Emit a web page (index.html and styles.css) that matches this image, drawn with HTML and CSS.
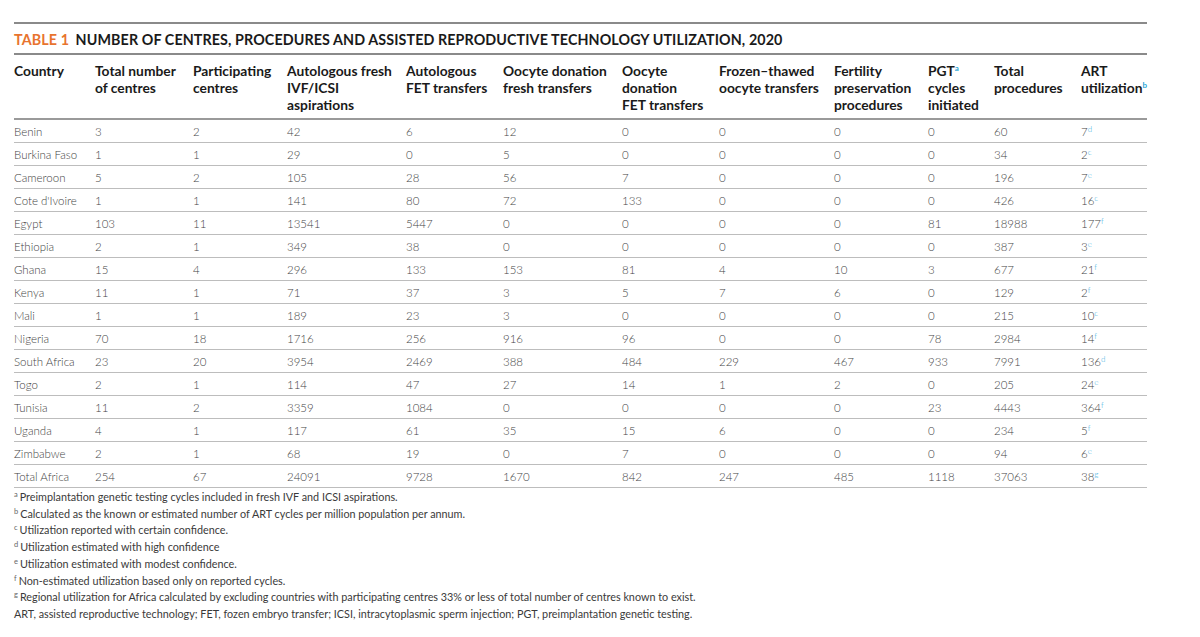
FILE: index.html
```html
<!DOCTYPE html>
<html>
<head>
<meta charset="utf-8">
<link rel="stylesheet" href="styles.css">
</head>
<body>
<div class="page">
  <div class="caption"><span class="tag">TABLE 1</span> NUMBER OF CENTRES, PROCEDURES AND ASSISTED REPRODUCTIVE TECHNOLOGY UTILIZATION, 2020</div>
  <table class="data">
    <colgroup>
      <col class="c1"><col class="c2"><col class="c3"><col class="c4"><col class="c5"><col class="c6"><col class="c7"><col class="c8"><col class="c9"><col class="c10"><col class="c11"><col class="c12">
    </colgroup>
    <thead>
      <tr>
        <th>Country</th>
        <th>Total number<br>of centres</th>
        <th>Participating<br>centres</th>
        <th>Autologous fresh<br>IVF/ICSI<br>aspirations</th>
        <th>Autologous<br>FET transfers</th>
        <th>Oocyte donation<br>fresh transfers</th>
        <th>Oocyte<br>donation<br>FET transfers</th>
        <th>Frozen–thawed<br>oocyte transfers</th>
        <th>Fertility<br>preservation<br>procedures</th>
        <th>PGT<sup class="hs">a</sup><br>cycles<br>initiated</th>
        <th>Total<br>procedures</th>
        <th>ART<br>utilization<sup class="hs">b</sup></th>
      </tr>
    </thead>
    <tbody>
      <tr><td>Benin</td><td>3</td><td>2</td><td>42</td><td>6</td><td>12</td><td>0</td><td>0</td><td>0</td><td>0</td><td>60</td><td>7<sup class="s">d</sup></td></tr>
      <tr><td>Burkina Faso</td><td>1</td><td>1</td><td>29</td><td>0</td><td>5</td><td>0</td><td>0</td><td>0</td><td>0</td><td>34</td><td>2<sup class="s">c</sup></td></tr>
      <tr><td>Cameroon</td><td>5</td><td>2</td><td>105</td><td>28</td><td>56</td><td>7</td><td>0</td><td>0</td><td>0</td><td>196</td><td>7<sup class="s">e</sup></td></tr>
      <tr><td>Cote d'Ivoire</td><td>1</td><td>1</td><td>141</td><td>80</td><td>72</td><td>133</td><td>0</td><td>0</td><td>0</td><td>426</td><td>16<sup class="s">c</sup></td></tr>
      <tr><td>Egypt</td><td>103</td><td>11</td><td>13541</td><td>5447</td><td>0</td><td>0</td><td>0</td><td>0</td><td>81</td><td>18988</td><td>177<sup class="s">f</sup></td></tr>
      <tr><td>Ethiopia</td><td>2</td><td>1</td><td>349</td><td>38</td><td>0</td><td>0</td><td>0</td><td>0</td><td>0</td><td>387</td><td>3<sup class="s">e</sup></td></tr>
      <tr><td>Ghana</td><td>15</td><td>4</td><td>296</td><td>133</td><td>153</td><td>81</td><td>4</td><td>10</td><td>3</td><td>677</td><td>21<sup class="s">f</sup></td></tr>
      <tr><td>Kenya</td><td>11</td><td>1</td><td>71</td><td>37</td><td>3</td><td>5</td><td>7</td><td>6</td><td>0</td><td>129</td><td>2<sup class="s">f</sup></td></tr>
      <tr><td>Mali</td><td>1</td><td>1</td><td>189</td><td>23</td><td>3</td><td>0</td><td>0</td><td>0</td><td>0</td><td>215</td><td>10<sup class="s">c</sup></td></tr>
      <tr><td>Nigeria</td><td>70</td><td>18</td><td>1716</td><td>256</td><td>916</td><td>96</td><td>0</td><td>0</td><td>78</td><td>2984</td><td>14<sup class="s">f</sup></td></tr>
      <tr><td>South Africa</td><td>23</td><td>20</td><td>3954</td><td>2469</td><td>388</td><td>484</td><td>229</td><td>467</td><td>933</td><td>7991</td><td>136<sup class="s">d</sup></td></tr>
      <tr><td>Togo</td><td>2</td><td>1</td><td>114</td><td>47</td><td>27</td><td>14</td><td>1</td><td>2</td><td>0</td><td>205</td><td>24<sup class="s">e</sup></td></tr>
      <tr><td>Tunisia</td><td>11</td><td>2</td><td>3359</td><td>1084</td><td>0</td><td>0</td><td>0</td><td>0</td><td>23</td><td>4443</td><td>364<sup class="s">f</sup></td></tr>
      <tr><td>Uganda</td><td>4</td><td>1</td><td>117</td><td>61</td><td>35</td><td>15</td><td>6</td><td>0</td><td>0</td><td>234</td><td>5<sup class="s">f</sup></td></tr>
      <tr><td>Zimbabwe</td><td>2</td><td>1</td><td>68</td><td>19</td><td>0</td><td>7</td><td>0</td><td>0</td><td>0</td><td>94</td><td>6<sup class="s">e</sup></td></tr>
      <tr><td>Total Africa</td><td>254</td><td>67</td><td>24091</td><td>9728</td><td>1670</td><td>842</td><td>247</td><td>485</td><td>1118</td><td>37063</td><td>38<sup class="s">g</sup></td></tr>
    </tbody>
  </table>
  <div class="notes">
    <p><sup>a</sup>Preimplantation genetic testing cycles included in fresh IVF and ICSI aspirations.</p>
    <p><sup>b</sup>Calculated as the known or estimated number of ART cycles per million population per annum.</p>
    <p><sup>c</sup>Utilization reported with certain confidence.</p>
    <p><sup>d</sup>Utilization estimated with high confidence</p>
    <p><sup>e</sup>Utilization estimated with modest confidence.</p>
    <p><sup>f</sup>Non-estimated utilization based only on reported cycles.</p>
    <p><sup>g</sup>Regional utilization for Africa calculated by excluding countries with participating centres 33% or less of total number of centres known to exist.</p>
    <p>ART, assisted reproductive technology; FET, fozen embryo transfer; ICSI, intracytoplasmic sperm injection; PGT, preimplantation genetic testing.</p>
  </div>
</div>
</body>
</html>
```
FILE: styles.css
```css
html, body {
  margin: 0;
  padding: 0;
  background: #ffffff;
}
body {
  font-family: "Lato", "Open Sans", sans-serif;
  color: #222;
}
.page {
  width: 1133px;
  margin-left: 14px;
  padding-top: 22px;
}
.caption {
  border-top: 2px solid #8a8a8a;
  border-bottom: 2px solid #8a8a8a;
  font-weight: 700;
  font-size: 14.3px;
  letter-spacing: 0.1px;
  color: #1a1a1a;
  height: 29px;
  line-height: 31px;
}
.caption .tag {
  color: #e8742e;
  margin-right: 3px;
}
.data {
  width: 1133px;
  table-layout: fixed;
  border-collapse: collapse;
}
.c1 { width: 81px; }
.c2 { width: 98px; }
.c3 { width: 94px; }
.c4 { width: 119px; }
.c5 { width: 97px; }
.c6 { width: 119px; }
.c7 { width: 97px; }
.c8 { width: 115px; }
.c9 { width: 94px; }
.c10 { width: 66px; }
.c11 { width: 87px; }
.c12 { width: 66px; }
.data th {
  text-align: left;
  vertical-align: top;
  font-weight: 700;
  font-size: 13.8px;
  line-height: 17px;
  color: #1a1a1a;
  padding: 7px 0 5px 0;
  border-bottom: 2px solid #9a9a9a;
  white-space: nowrap;
}
.data td {
  text-align: left;
  font-weight: 300;
  font-size: 11.5px;
  color: #444;
  height: 22px;
  padding: 0;
  border-bottom: 1px solid #bdbdbd;
  white-space: nowrap;
}
.hs {
  color: #2aa6d6;
  font-size: 8px;
  vertical-align: 5px;
  line-height: 0;
}
.s {
  color: #39aee0;
  font-size: 8px;
  vertical-align: 4px;
  line-height: 0;
}
.notes {
  padding-top: 1px;
}
.notes p {
  margin: 0;
  font-size: 10.8px;
  line-height: 16.7px;
  font-weight: 400;
  color: #3a3a3a;
}
.notes sup {
  font-size: 7.5px;
  vertical-align: 4px;
  line-height: 0;
  color: #666;
  margin-right: 2px;
}
```
